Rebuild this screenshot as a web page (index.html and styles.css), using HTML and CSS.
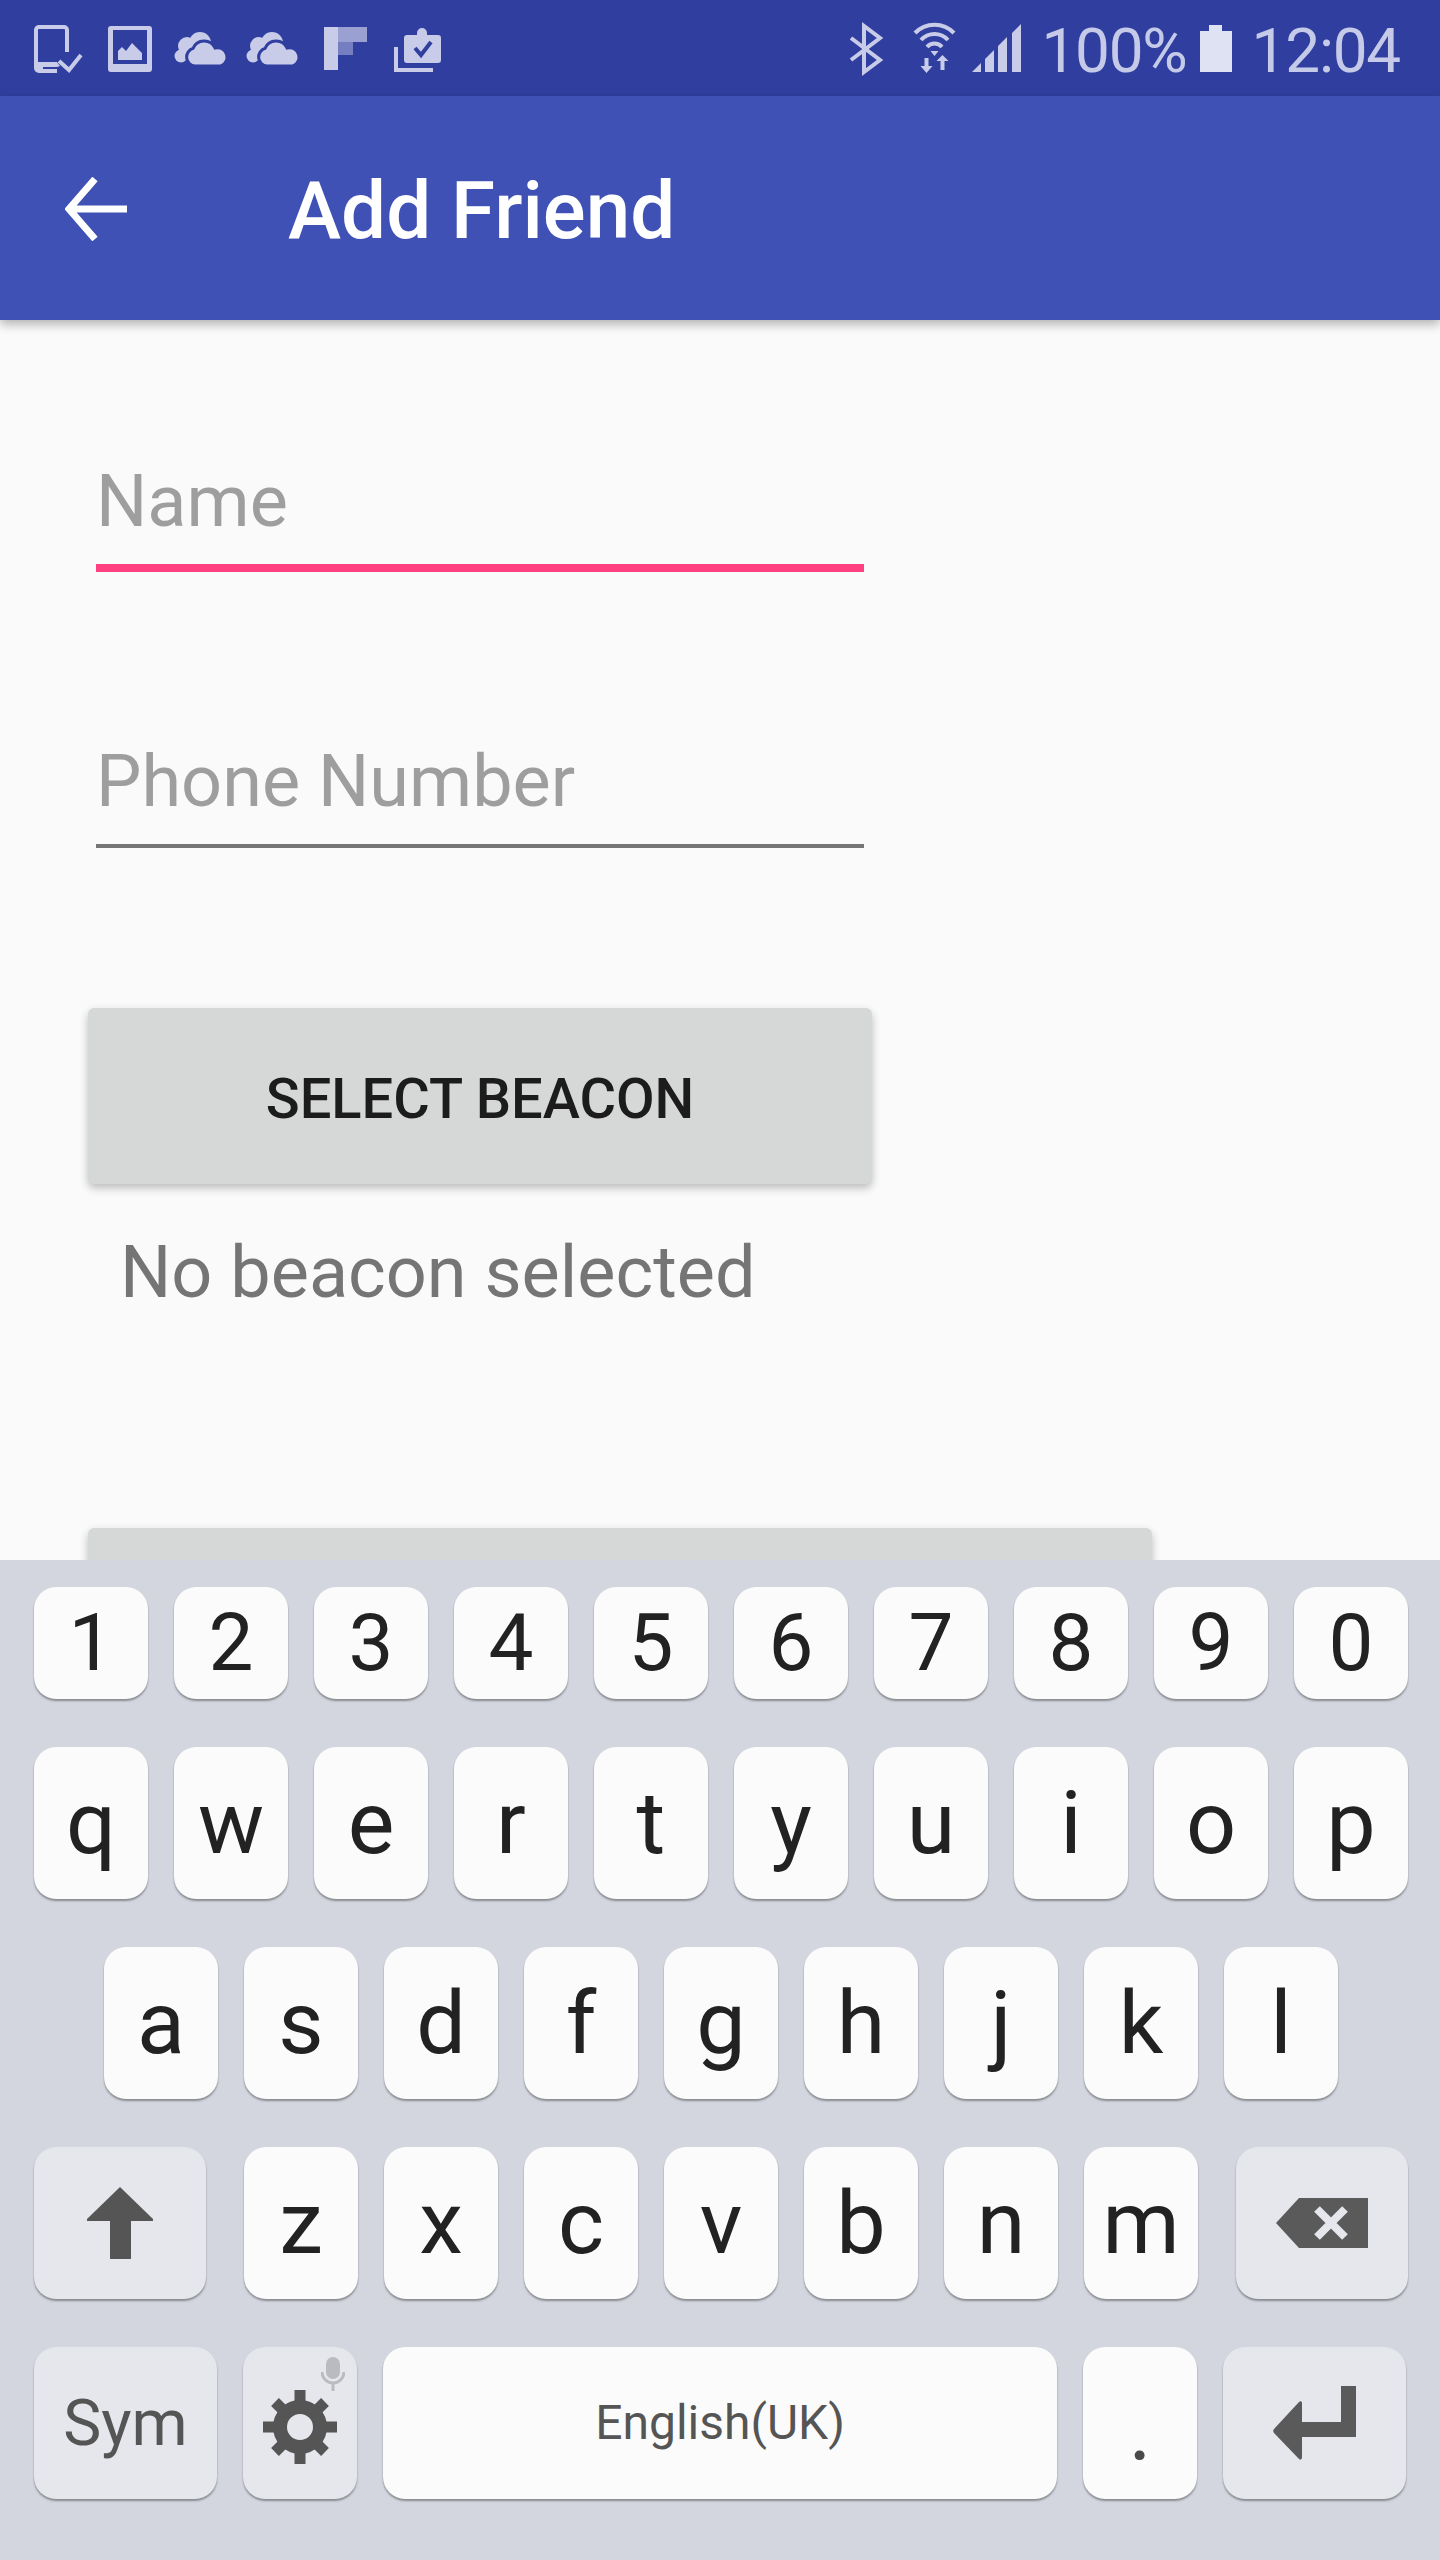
FILE: index.html
```html
<!DOCTYPE html>
<html>
<head>
  <title>Add Friend</title>
  <link rel="stylesheet" href="styles.css">
</head>
<body>
  <div class="screen">
    <div class="status-bar">
      <div class="status-left">
        <svg class="status-icon" viewBox="0 0 72 72">
          <path class="line" d="M46 40V18a3 3 0 0 0-3-3H18a3 3 0 0 0-3 3v38a3 3 0 0 0 3 3h18" />
          <path class="solid" d="M15 50h21l3 4-3 1H22v2h14v3H15z" />
          <path class="line" d="M38 49l10 9 12-15" />
        </svg>
        <svg class="status-icon" viewBox="0 0 72 72">
          <path class="solid" fill-rule="evenodd" d="M18 14h38a3 3 0 0 1 3 3v40a3 3 0 0 1-3 3H18a3 3 0 0 1-3-3V17a3 3 0 0 1 3-3zM20 18v34h34V18zM25 48v-9l4-4 4 4 6-8 10 10v7z" />
        </svg>
        <svg class="status-icon" viewBox="0 0 72 72">
          <circle class="solid" cx="35" cy="31" r="11" />
          <circle class="solid" cx="22" cy="34" r="9" />
          <circle class="solid" cx="16" cy="44" r="6.500" />
          <path class="cloud-front" d="M30 54a9 9 0 0 1-2-17.600A12 12 0 0 1 50 36a9.500 9.500 0 0 1 6 18z" />
        </svg>
        <svg class="status-icon" viewBox="0 0 72 72">
          <circle class="solid" cx="35" cy="31" r="11" />
          <circle class="solid" cx="22" cy="34" r="9" />
          <circle class="solid" cx="16" cy="44" r="6.500" />
          <path class="cloud-front" d="M30 54a9 9 0 0 1-2-17.600A12 12 0 0 1 50 36a9.500 9.500 0 0 1 6 18z" />
        </svg>
        <svg class="status-icon" viewBox="0 0 72 72">
          <rect class="solid" x="15" y="15" width="14" height="43" />
          <rect class="solid faded" x="29" y="15" width="29" height="15" />
          <rect class="solid dim" x="29" y="30" width="15" height="13" />
        </svg>
        <svg class="status-icon" viewBox="0 0 72 72">
          <path class="line" d="M15 35v23h37" />
          <path class="solid" d="M26 23h10v-2a5 5 0 0 1 10 0v2h11a3 3 0 0 1 3 3v22a3 3 0 0 1-3 3H26a3 3 0 0 1-3-3V26a3 3 0 0 1 3-3z" />
          <path class="check-cut" d="M34 36l6 7 10-13" />
        </svg>
      </div>
      <div class="status-right">
        <svg class="status-bt" viewBox="0 0 72 72">
          <path class="line" d="M22 26l29 22-16 12V14l16 12-29 22" />
        </svg>
        <svg class="status-wifi" viewBox="0 0 66 72">
          <path class="line" d="M14 21a27 27 0 0 1 39 0M20 28a18 18 0 0 1 27 0M26 35a10 10 0 0 1 15 0" />
          <path class="solid" d="M29.500 39h8l-4 5zM23.500 46h4v8h4l-6 7-6-7h4zM39.500 58h4v-9h4l-6-6-6 6h4z" />
        </svg>
        <svg class="status-signal" viewBox="0 0 59 72">
          <path class="solid" d="M5 60l9-9v9zM18 60V47l9-9v22zM31 60V34l9-9v35zM45 60V21l9-9v48z" />
        </svg>
        <span class="status-text status-pct">100%</span>
        <svg class="status-battery" viewBox="0 0 32 47">
          <path d="M9 0h13v6h10v41H0V6h9z" />
        </svg>
        <span class="status-text status-time">12:04</span>
      </div>
    </div>

    <div class="toolbar">
      <svg class="back-icon" viewBox="0 0 64 64">
        <path d="M62 32H4M30 2L4 32l26 30" />
      </svg>
      <div class="toolbar-title">Add Friend</div>
    </div>

    <div class="content">
      <div class="field field-active">Name</div>
      <div class="field">Phone Number</div>
      <div class="btn btn-select">SELECT BEACON</div>
      <div class="beacon-note">No beacon selected</div>
      <div class="btn btn-wide"></div>
    </div>

    <div class="keyboard">
      <div class="key-row">
        <div class="key key-digit">1</div>
        <div class="key key-digit">2</div>
        <div class="key key-digit">3</div>
        <div class="key key-digit">4</div>
        <div class="key key-digit">5</div>
        <div class="key key-digit">6</div>
        <div class="key key-digit">7</div>
        <div class="key key-digit">8</div>
        <div class="key key-digit">9</div>
        <div class="key key-digit">0</div>
      </div>
      <div class="key-row">
        <div class="key">q</div>
        <div class="key">w</div>
        <div class="key">e</div>
        <div class="key">r</div>
        <div class="key">t</div>
        <div class="key">y</div>
        <div class="key">u</div>
        <div class="key">i</div>
        <div class="key">o</div>
        <div class="key">p</div>
      </div>
      <div class="key-row key-row-center">
        <div class="key">a</div>
        <div class="key">s</div>
        <div class="key">d</div>
        <div class="key">f</div>
        <div class="key">g</div>
        <div class="key">h</div>
        <div class="key">j</div>
        <div class="key">k</div>
        <div class="key">l</div>
      </div>
      <div class="key-row key-row-split">
        <div class="key key-fn key-side">
          <svg class="icon-shift" viewBox="0 0 66 72">
            <path d="M33 0l33 32v2H44v38H23V34H0v-2z" />
          </svg>
        </div>
        <div class="key-group">
          <div class="key">z</div>
          <div class="key">x</div>
          <div class="key">c</div>
          <div class="key">v</div>
          <div class="key">b</div>
          <div class="key">n</div>
          <div class="key">m</div>
        </div>
        <div class="key key-fn key-side">
          <svg class="icon-backspace" viewBox="0 0 92 50">
            <path d="M23 0h69v50H23L0 25z" />
            <path class="backspace-x" d="M41 11l28 28M69 11L41 39" />
          </svg>
        </div>
      </div>
      <div class="key-row">
        <div class="key key-fn key-sym">Sym</div>
        <div class="key key-fn key-settings">
          <svg class="icon-mic" viewBox="0 0 24 34">
            <rect x="5" y="0" width="14" height="22" rx="7" />
            <path d="M1 15a11 11 0 0 0 22 0M12 26v8" />
          </svg>
          <svg class="icon-gear" viewBox="-37 -37 74 74">
            <path d="M0-37V37M-37 0H37M-25-25L25 25M25-25L-25 25" />
            <circle r="20" />
          </svg>
        </div>
        <div class="key key-space">English(UK)</div>
        <div class="key key-dot">.</div>
        <div class="key key-fn key-sym">
          <svg class="icon-enter" viewBox="0 0 83 74">
            <path d="M68 0h15v51H29v20c0 3-2 3-3 2L1 47c-1-1-1-3 0-4l25-27c1-1 3-1 3 1v19h39z" />
          </svg>
        </div>
      </div>
    </div>
  </div>
</body>
</html>
```

FILE: styles.css
```css
* { box-sizing: border-box; }
body {
  margin: 0;
  font-family: Roboto, "Liberation Sans", sans-serif;
  background: #fafafa;
}
.screen {
  width: 1440px;
  height: 2560px;
  display: flex;
  flex-direction: column;
  overflow: hidden;
}

/* status bar */
.status-bar {
  height: 96px;
  flex: none;
  display: flex;
  justify-content: space-between;
  align-items: center;
  padding: 0 40px 0 21px;
  background: #303f9f;
  color: #c5cae9;
}
.status-left, .status-right { display: flex; align-items: center; }
.status-icon, .status-bt { width: 72px; height: 72px; }
.status-wifi { width: 66px; height: 72px; }
.status-signal { width: 59px; height: 72px; }
.solid { fill: #c8cce8; }
.faded { opacity: 0.7; }
.dim { opacity: 0.45; }
.line { fill: none; stroke: #c8cce8; stroke-width: 4; }
.cloud-front { fill: #c8cce8; stroke: #303f9f; stroke-width: 3; }
.check-cut { fill: none; stroke: #303f9f; stroke-width: 4; }
.status-text {
  margin-top: 6px;
  font-size: 62px;
  line-height: 72px;
  letter-spacing: -1.2px;
}
.status-pct { margin-left: 15px; }
.status-battery { width: 32px; height: 47px; margin: 0 20px 0 13px; fill: #dfe2f2; }

/* toolbar */
.toolbar {
  height: 224px;
  flex: none;
  position: relative;
  display: flex;
  align-items: center;
  padding-left: 65px;
  background: #3f51b5;
  box-shadow: 0 4px 10px rgba(0,0,0,0.3);
}
.back-icon { width: 64px; height: 64px; margin-top: 2px; fill: none; stroke: #fff; stroke-width: 7; }
.toolbar-title {
  margin: 6px 0 0 159px;
  font-size: 80px;
  font-weight: 500;
  color: #fff;
}

/* form */
.content {
  flex: 1;
  min-height: 0;
  overflow: hidden;
  padding: 140px 0 0 88px;
  background: #fafafa;
}
.field {
  width: 768px;
  margin: 0 0 167px 8px;
  padding: 0 0 20px 0;
  border-bottom: 4px solid #757575;
  font-size: 72px;
  line-height: 84px;
  color: #9e9e9e;
}
.field-active { border-bottom: 8px solid #ff4081; margin-bottom: 168px; }
.btn {
  background: #d6d7d7;
  border-radius: 6px;
  box-shadow: 0 4px 8px rgba(0,0,0,0.25);
}
.btn-select {
  width: 784px;
  height: 176px;
  margin-top: -7px;
  padding-top: 6px;
  display: flex;
  align-items: center;
  justify-content: center;
  font-size: 56px;
  font-weight: 500;
  color: #1c1c1c;
}
.beacon-note {
  margin: 47px 0 213px 32px;
  font-size: 72px;
  line-height: 84px;
  color: #757575;
}
.btn-wide { width: 1064px; height: 176px; }

/* keyboard */
.keyboard {
  height: 1000px;
  flex: none;
  display: flex;
  flex-direction: column;
  gap: 48px;
  padding: 27px 32px 0 34px;
  background: #d3d6df;
}
.key-row { display: flex; gap: 26px; }
.key-row-center { padding-left: 70px; }
.key-row-split { justify-content: space-between; }
.key-group { display: flex; gap: 26px; }
.key {
  width: 114px;
  height: 152px;
  flex: none;
  display: flex;
  align-items: center;
  justify-content: center;
  padding-bottom: 2px;
  border-radius: 22px;
  background: #fbfbfb;
  box-shadow: 0 2px 2px rgba(0,0,0,0.35);
  font-size: 88px;
  color: #222;
}
.key-digit { height: 112px; padding-bottom: 0; font-size: 80px; }
.key-fn { padding-bottom: 0; background: #e6e7ec; color: #555; }
.key-side { width: 172px; }
.key-sym { width: 183px; font-size: 64px; }
.key-settings { position: relative; }
.key-space { width: 674px; font-size: 48px; color: #555; }
.key-dot { padding: 10px 0 0; color: #4a4a4a; }
.icon-shift { width: 66px; height: 72px; fill: #555; }
.icon-backspace { width: 92px; height: 50px; fill: #5a5a5a; }
.backspace-x { fill: none; stroke: #e6e7ec; stroke-width: 8; }
.icon-enter { width: 83px; height: 74px; fill: #5a5a5a; }
.icon-gear { width: 74px; height: 74px; margin-top: 8px; }
.icon-gear path { fill: none; stroke: #555; stroke-width: 11; }
.icon-gear circle { fill: #e6e7ec; stroke: #555; stroke-width: 14; }
.icon-mic {
  position: absolute;
  top: 10px;
  right: 12px;
  width: 24px;
  height: 34px;
  fill: #b9bbc0;
}
.icon-mic path { fill: none; stroke: #b9bbc0; stroke-width: 3; }
```
